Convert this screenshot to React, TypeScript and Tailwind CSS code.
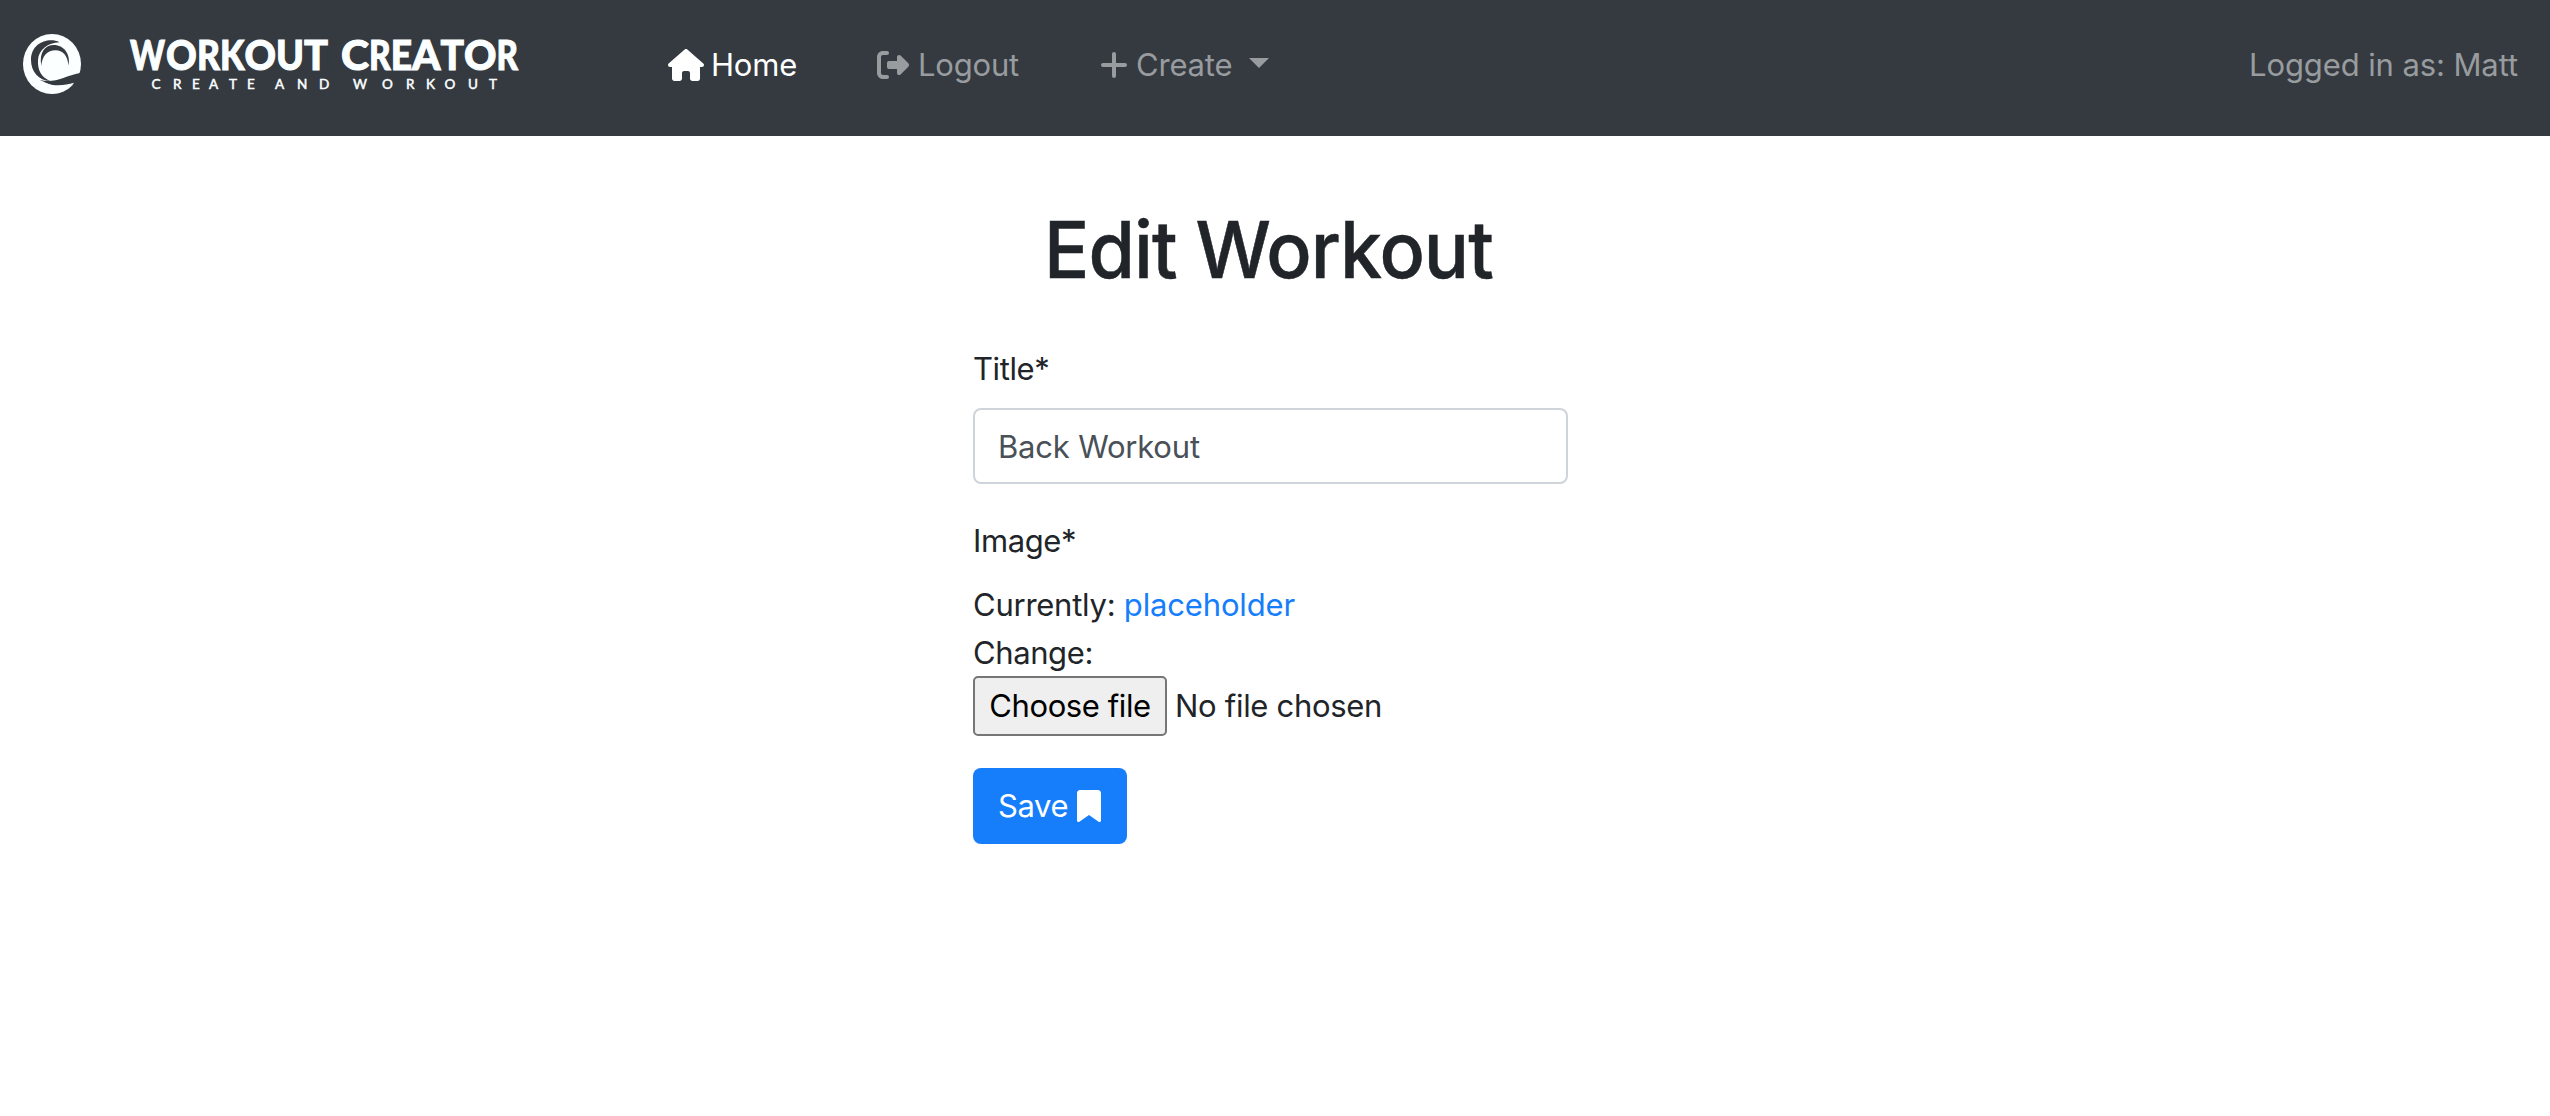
import { FaHouse, FaRightFromBracket, FaPlus, FaBookmark } from "react-icons/fa6";

const wordmark: [string, number, number][] = [
  ["W", 130, 35],
  ["O", 166, 30.8],
  ["R", 197, 23],
  ["K", 220, 24.5],
  ["O", 244.5, 31.5],
  ["U", 276, 28],
  ["T", 304, 24],
  ["C", 341, 28],
  ["R", 369, 21.7],
  ["E", 390.7, 21.3],
  ["A", 412, 28.5],
  ["T", 440.5, 23.5],
  ["O", 464, 32.5],
  ["R", 496.5, 21.5],
];

function Logo() {
  return (
    <svg width="540" height="136" viewBox="0 0 540 136" fill="#fbffff" className="block shrink-0" aria-label="Workout Creator">
      <ellipse cx="52" cy="64" rx="29" ry="30" />
      <g fill="#343a40">
        <path d="M59.5 42.3C49 37 31 42.500 31 60C31 72 39 80.500 50 81C41 77 37.500 70 38 60C38.500 50 48 42.500 59.500 42.300Z" />
        <path d="M41.300 66C39 52 45 45 54 45C63.500 45 71 54 68.500 65.500C67.500 55.500 63 50.300 55.500 50.300C47.500 50.300 42 56 41.300 66Z" />
        <path d="M40 80C54 84 65 76 80 73L84 72L77 83.500C70 87.500 53 88.500 40 80Z" />
      </g>
      <path d="M42 81C54 88 65 85 74 82.800C71 88.500 62 89 55 89.300L65 90.300C58 95 44 94 36 88Z" />
      <g fontFamily="Lato, sans-serif" letterSpacing="0">
        <g fontSize="41" fontWeight="900" stroke="#fbffff" strokeWidth="1">
          {wordmark.map(([letter, x, width]) => (
            <text key={x} x={x} y="69.5" textLength={width} lengthAdjust="spacingAndGlyphs">{letter}</text>
          ))}
        </g>
        <text y="89.300" fontSize="13.500" fontWeight="400" stroke="#fbffff" strokeWidth="0.5" x="151.500 173 192 209 229 247 275 297 319 353 382 406 426 444.500 468 489">CREATEANDWORKOUT</text>
      </g>
    </svg>
  );
}

export default function App() {
  return (
    <div className="min-h-[1116px] bg-white font-['Inter',sans-serif] text-[31px] leading-[48px] tracking-[-0.4px] text-[#212529]">
      <nav className="flex h-[136px] items-start bg-[#343a40] text-[#999c9f]">
        <Logo />
        <div className="ml-[128px] mt-[41px] flex items-center whitespace-nowrap tracking-[-0.2px]">
          <a className="flex w-[209px] items-center gap-[7px] text-white">
            <FaHouse className="h-8 w-9" />
            <span>Home</span>
          </a>
          <a className="flex w-[223px] items-center gap-[9px]">
            <FaRightFromBracket className="h-8 w-8" />
            <span>Logout</span>
          </a>
          <a className="flex items-center">
            <FaPlus className="mr-2 h-8 w-7" />
            <span>Create</span>
            <i className="ml-[17px] mt-[-4px] border-x-[10px] border-t-[10px] border-x-transparent border-t-[#999c9f]" />
          </a>
        </div>
        <span className="ml-auto mr-8 mt-[41px] whitespace-nowrap tracking-[-0.1px]">Logged in as: Matt</span>
      </nav>
      <main className="ml-[973px] w-[595px] pt-[66px]">
        <h1 className="ml-[71px] w-[460px] origin-left scale-x-[0.959] whitespace-nowrap text-[78.5px] font-medium leading-[96px] tracking-[-1.05px] [-webkit-text-stroke:0.5px_#212529]">Edit Workout</h1>
        <form className="mt-[47px]">
          <label className="block">Title*</label>
          <input
            className="mt-[15px] block h-[76px] w-[595px] rounded-lg border-2 border-[#ced4da] px-[23px] tracking-[-0.2px] text-[#495057] outline-none"
            defaultValue="Back Workout"
          />
          <label className="mt-[33px] block">Image*</label>
          <div className="mt-4 tracking-[-0.25px]">
            Currently: <a className="tracking-[-0.15px] text-[#167efb]">placeholder</a>
          </div>
          <div>Change:</div>
          <div className="mt-[-1px] flex items-center">
            <button type="button" className="h-[60px] w-[194px] rounded-[5px] border-2 border-[#767676] bg-[#efefef] text-black">
              Choose file
            </button>
            <span className="ml-2 tracking-[-0.3px]">No file chosen</span>
          </div>
          <button type="button" className="mt-8 flex h-[76px] w-[154px] items-center rounded-lg bg-[#167efb] pl-[25px] text-white">
            Save
            <FaBookmark className="ml-[9px] h-8 w-6" />
          </button>
        </form>
      </main>
    </div>
  );
}
